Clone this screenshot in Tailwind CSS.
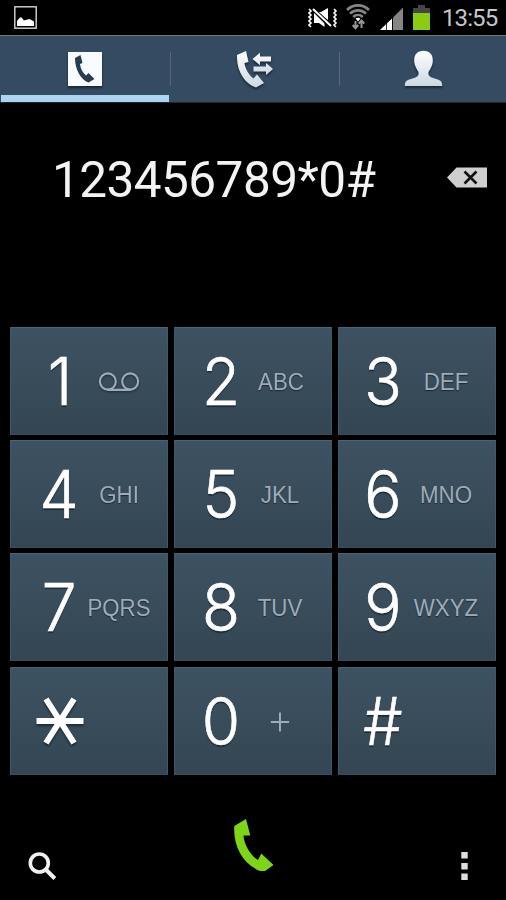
<!DOCTYPE html>
<html lang="en">
<head>
<meta charset="utf-8">
<title>Phone</title>
<script src="https://cdn.jsdelivr.net/npm/@tailwindcss/browser@4"></script>
</head>
<body class="bg-black">
<div class="w-[506px] h-[900px] bg-black overflow-hidden flex flex-col font-[Roboto,sans-serif]">

  <!-- Status bar -->
  <header class="h-[35px] shrink-0 flex items-start">
    <svg class="ml-[14px] mt-[6px]" width="23" height="23" viewBox="0 0 23 23"><rect x=".8" y=".8" width="21.4" height="21.4" fill="none" stroke="#d8d8d8" stroke-width="1.4"/><path d="M3 20v-5l2-2.500 2-1.500 3 3.500 2.500-.8 3-.7 4.500 2.500v4.500z" fill="#fff"/></svg>
    <svg class="ml-[271px] mt-[7px]" width="30" height="21" viewBox="0 0 30 21" fill="#fff"><path d="M6 5v11h5l5.500 4V15L7 5zM10 5h3l7-4v12z"/><path d="M5 2l17 17" stroke="#000" stroke-width="4"/><path d="M5 2l18 17" stroke="#fff" stroke-width="2"/><path d="M1 2l2 2-2 2 2 2-2 2 2 2-2 2 2 2-2 2 2 2M26 2l2 2-2 2 2 2-2 2 2 2-2 2 2 2-2 2 2 2" fill="none" stroke="#fff" stroke-width="1.600"/></svg>
    <svg class="ml-[8px] mt-[4px]" width="24" height="26" viewBox="0 0 24 26" fill="none" stroke="#858585"><path d="M1 6C7-.2 17-.2 23 6M4 9.700c4.500-4.500 11.500-4.500 16 0M7.200 13c2.800-2.700 6.800-2.700 9.600 0" stroke-width="2.600"/><path d="M9.500 14.500q2.500-1.500 5 0L12 17.500z" fill="#fff" stroke="none"/><path d="M9.500 17v7M6.700 21l2.800 3.200 2.800-3.200M15.500 24v-7M12.700 19.700l2.800-3.200 2.800 3.200" stroke-width="1.900" stroke="#999"/></svg>
    <svg class="ml-[10px] mt-[7px]" width="23" height="23" viewBox="0 0 23 23"><path d="M0 23L12 11.500V23z" fill="#fff"/><path d="M6.500 16v7" stroke="#000" stroke-width=".8"/><path d="M13 10.500L23 .5V23H13z" fill="#858585"/></svg>
    <svg class="ml-[10px] mt-[5px]" width="17" height="25" viewBox="0 0 17 25"><path d="M5 0h7v3h5v5H0V3h5z" fill="#454545"/><path d="M0 8h17v17H0z" fill="#8bcb13"/></svg>
    <time class="ml-[12px] mt-[4px] text-[24px] leading-[28px] tracking-[-0.9px] font-normal text-[#c6c6c6] whitespace-nowrap">13:55</time>
  </header>

  <!-- Tabs -->
  <nav class="h-[68px] shrink-0 bg-[#344b61] border-t border-[#72777b] border-b border-b-[#1a2632] flex items-stretch">
    <div class="w-[170px] flex flex-col items-center">
      <svg class="mt-[15px] drop-shadow-[0_2px_1px_rgba(0,0,0,.5)]" width="36" height="36" viewBox="0 0 36 36"><path d="M1 1h34v34H1z" fill="#f8fcff"/><path d="M8 7l5.500-3 2 8-2.500 1c.5 5 3 9 6 11.500l2.500-2.500 6 6-6 3.500C14 29 8 19 8 7z" fill="#263c4f"/></svg>
      <div class="mt-auto w-[168px] h-[7px] bg-[#aad5f0]"></div>
    </div>
    <div class="w-px h-[34px] mt-[16px] bg-[#566779]"></div>
    <div class="w-[168px] flex justify-center">
      <svg class="mt-[14px] drop-shadow-[0_2px_1px_rgba(0,0,0,.45)]" width="37" height="38" viewBox="0 0 37 38"><defs><linearGradient id="silver" x2="0" y2="1"><stop stop-color="#fff"/><stop offset="1" stop-color="#ccd8e2"/></linearGradient></defs><g fill="url(#silver)"><path d="M0 5L9 1l2.500 11-4 1c.5 6 5 12.500 9 15.500l3.500-4 7 8.500-8 4.500C7 33-.5 21 0 5z"/><path d="M15.500 9L23 2.800V6.500H34v5H23v3.700zM36 19L29 13v3.500H16.500v5H29V25z"/></g></svg>
    </div>
    <div class="w-px h-[34px] mt-[16px] bg-[#566779]"></div>
    <div class="grow flex justify-center">
      <svg class="mt-[14px] drop-shadow-[0_2px_1px_rgba(0,0,0,.45)]" width="39" height="37" viewBox="0 0 39 37"><path d="M19.500.8c6 0 9.500 3.700 9.300 10-.1 3.500-1 5.200-1.800 6.700-.7 2-1.800 3.200-2.500 4.500-.5 2.700.5 4.500 3 5.500l7 2.200c3 1.100 3.800 3 3.700 6.300H.8c-.1-3.300.7-5.200 3.700-6.300l7-2.200c2.500-1 3.500-2.800 3-5.500-.7-1.300-1.800-2.500-2.500-4.500-.8-1.500-1.700-3.200-1.800-6.700C10 4.500 13.500.8 19.500.8z" fill="url(#silver)"/></svg>
    </div>
  </nav>

  <!-- Dialled number -->
  <section class="h-[224px] shrink-0 flex items-start justify-between pl-[52px] pr-[19px]">
    <output class="mt-[49px] text-[49.500px] leading-[57px] tracking-[-0.550px] text-[#f3f3f3]">123456789*0#</output>
    <svg class="mt-[64px]" width="40" height="21" viewBox="0 0 40 21"><path d="M0 10.500L9.500.5H40v20H9.500z" fill="#cfcfcf"/><path d="M17.500 4.500l12 12M29.500 4.500l-12 12" stroke="#101010" stroke-width="2.600"/></svg>
  </section>

  <!-- Keypad -->
  <main class="h-[447.600px] shrink-0 mx-[10px] grid grid-cols-3 grid-rows-4 gap-x-[6px] gap-y-[5.200px]
    *:flex *:items-center *:pl-[18px] *:nth-[3n+2]:pl-[16px] *:nth-[3n]:pl-[14px] *:bg-linear-to-b *:from-[#3d5262] *:to-[#344653] *:border *:border-[#40596a] *:border-b-[#394d5b] *:border-t-[#4b6473]
    [&_b]:w-[60px] [&_b]:shrink-0 [&_b]:text-center [&_b]:scale-x-[0.94] [&_b]:font-[Inter,sans-serif] [&_b]:font-light [&_b]:text-[66px] [&_b]:leading-[106px] [&_b]:text-white [&_b]:[-webkit-text-stroke:0.700px_#fff] [&_b]:text-shadow-[0_2px_1px_#1b2a36]
    [&_i]:w-[62px] [&_i]:-ml-px [&_i]:shrink-0 [&_i]:flex [&_i]:justify-center [&_i]:scale-x-[0.97] [&_i]:pt-[2px] [&_i]:not-italic [&_i]:font-['Liberation_Sans',sans-serif] [&_i]:text-[23px] [&_i]:text-[#9eabb8] [&_i]:text-shadow-[0_1px_1px_#1b2a36]">
    <div><b class="translate-x-[1px]">1</b><i><svg class="drop-shadow-[0_1px_1px_#1b2a36]" width="42" height="20" viewBox="0 0 42 20" fill="none" stroke="#9eabb8" stroke-width="2.200"><circle cx="9.500" cy="9.500" r="8.200"/><circle cx="32.500" cy="9.500" r="8.200"/><path d="M9 17.800h24"/></svg></i></div>
    <div><b>2</b><i>ABC</i></div>
    <div><b>3</b><i class="translate-x-[3px]">DEF</i></div>
    <div><b>4</b><i>GHI</i></div>
    <div><b>5</b><i class="-translate-x-px">JKL</i></div>
    <div><b>6</b><i class="translate-x-[3px]">MNO</i></div>
    <div><b>7</b><i>PQRS</i></div>
    <div><b>8</b><i class="-translate-x-px">TUV</i></div>
    <div><b>9</b><i class="translate-x-[3px]">WXYZ</i></div>
    <div><svg class="ml-[7px] drop-shadow-[0_2px_1px_#1b2a36]" width="48" height="48" viewBox="0 0 48 48" stroke="#fff" stroke-width="6"><path d="M.5 24h47M10 2l28 44M38 2L10 46"/></svg></div>
    <div><b>0</b><i class="-translate-x-px"><svg width="20" height="20" viewBox="0 0 20 20" stroke="#9eabb8" stroke-width="2"><path d="M.5 10h19M10 .5v19"/></svg></i></div>
    <div><b class="scale-[1.04]">#</b></div>
  </main>

  <!-- Bottom actions -->
  <footer class="grow flex items-start justify-between pl-[28px] pr-[38px]">
    <svg class="mt-[77px]" width="29" height="29" viewBox="0 0 29 29" fill="none" stroke="#f2f2f2"><circle cx="11.300" cy="11" r="9" stroke-width="3.600"/><path d="M17.800 17.500l9 9" stroke-width="4"/></svg>
    <svg class="mt-[44px] ml-[-11px]" width="40" height="53" viewBox="0 0 40 53"><path d="M.3 7L12 0l4.300 16.500H9.500C10 26 17 37 24 41l3.300-6.500L39.500 46 31 52h-5C9 45-1 28 .3 7z" fill="#7ed518"/></svg>
    <svg class="mt-[77px]" width="7" height="28" viewBox="0 0 7 28" fill="#dedede"><path d="M.3 0h6.400v6.500H.3zM.3 11h6.400v6.500H.3zM.3 21.500h6.400V28H.3z"/></svg>
  </footer>
</div>
</body>
</html>
